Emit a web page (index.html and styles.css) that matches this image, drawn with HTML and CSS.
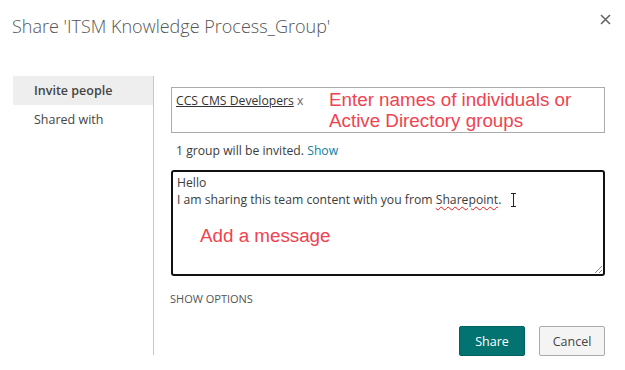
FILE: index.html
```html
<!DOCTYPE html>
<html lang="en">
<head>
    <meta charset="UTF-8">
    <meta name="viewport" content="width=device-width, initial-scale=1.0">
    <title>Share</title>
    <link rel="stylesheet" href="styles.css">
</head>
<body>
    <div class="dialog">
        <div class="cabecalho">
            <h1 class="titulo">Share 'ITSM Knowledge Process_Group'</h1>
            <button class="fechar" title="Close">
                <svg width="11" height="11" viewBox="0 0 11 11"><path d="M1 1 L10 10 M10 1 L1 10" stroke="#666" stroke-width="1.6" fill="none"/></svg>
            </button>
        </div>

        <div class="corpo">
            <div class="menu">
                <div class="item ativo">Invite people</div>
                <div class="item">Shared with</div>
            </div>

            <div class="conteudo">
                <div class="caixaNomes">
                    <span class="pessoa">CCS CMS Developers</span> <span class="remover">x</span>
                    <div class="nota notaNomes">Enter names of individuals or<br>Active Directory groups</div>
                </div>
                <p class="convidados">1 group will be invited. <a class="link">Show</a></p>

                <div class="caixaMensagem">
                    <p>Hello</p>
                    <p>I am sharing this team content with you from <span class="erro">Sharepoint</span>.</p>
                    <span class="cursor"></span>
                    <div class="nota notaMensagem">Add a message</div>
                    <svg class="alca" width="8" height="8" viewBox="0 0 8 8"><path d="M8 1 L1 8 M8 5 L5 8" stroke="#888" stroke-width="1"/></svg>
                </div>

                <p class="opcoes">SHOW OPTIONS</p>

                <div class="botoes">
                    <button class="botao principal">Share</button>
                    <button class="botao">Cancel</button>
                </div>
            </div>
        </div>
    </div>
</body>
</html>
```

FILE: styles.css
```css
body {
    margin: 0;
    font-family: "Open Sans", sans-serif;
    font-size: 12.2px;
    color: #3c3c3c;
    background: #fff;
}

.dialog {
    width: 625px;
    height: 370px;
}

.cabecalho {
    display: flex;
    justify-content: space-between;
    align-items: flex-start;
    padding: 13px 14px 0 12px;
}

.titulo {
    margin: 0;
    font-size: 18px;
    font-weight: 300;
    color: #555;
    line-height: 26px;
}

.fechar {
    border: none;
    background: none;
    padding: 0;
    margin-top: 0;
    width: 11px;
    height: 11px;
    cursor: pointer;
}

.corpo {
    display: flex;
    margin-top: 37px;
    margin-left: 13px;
}

.menu {
    width: 140px;
    height: 279px;
    border-right: 1px solid #c8c8c8;
}

.item {
    padding-left: 21px;
    height: 29px;
    line-height: 29px;
    font-size: 12.5px;
    color: #444;
}

.item.ativo {
    background: #eeeeee;
    font-weight: 600;
}

.conteudo {
    padding: 11px 0 0 17px;
    width: 434px;
}

.caixaNomes {
    position: relative;
    border: 1px solid #ababab;
    padding: 4px 0 0 4px;
    box-sizing: border-box;
    height: 46px;
}

.pessoa {
    color: #333;
    text-decoration: underline;
}

.remover {
    color: #666;
}

.nota {
    position: absolute;
    font-family: "Liberation Sans", Arial, sans-serif;
    font-size: 18.8px;
    line-height: 21px;
    color: #f0434f;
}

.notaNomes {
    left: 157px;
    top: 1px;
}

.convidados {
    margin: 9px 0 0 5px;
    line-height: 18px;
}

.link {
    color: #0f7fa0;
    cursor: pointer;
}

.caixaMensagem {
    position: relative;
    margin-top: 10px;
    height: 106px;
    box-sizing: border-box;
    border: 2px solid #111;
    border-radius: 3px;
    padding: 2px 0 0 4px;
}

.caixaMensagem p {
    margin: 0;
    line-height: 17px;
}

.erro {
    text-decoration: underline wavy #e02020;
    text-decoration-thickness: 1px;
    text-underline-offset: 2px;
}

.cursor {
    position: absolute;
    left: 338px;
    top: 21px;
    width: 5px;
    height: 14px;
    border-top: 1px solid #222;
    border-bottom: 1px solid #222;
    box-sizing: border-box;
}

.cursor::after {
    content: "";
    position: absolute;
    left: 2px;
    top: 0;
    width: 1px;
    height: 12px;
    background: #222;
}

.notaMensagem {
    left: 27px;
    top: 53px;
}

.alca {
    position: absolute;
    right: 1px;
    bottom: 1px;
}

.opcoes {
    margin: 16px 0 0 -1px;
    font-size: 11px;
    color: #555;
    line-height: 14px;
}

.botoes {
    display: flex;
    justify-content: flex-end;
    gap: 14px;
    margin-top: 20px;
}

.botao {
    width: 66px;
    height: 30px;
    font-family: "Open Sans", sans-serif;
    font-size: 12.5px;
    color: #444;
    background: #f4f4f4;
    border: 1px solid #ababab;
    border-radius: 2px;
    cursor: pointer;
}

.botao.principal {
    background: #037372;
    border-color: #036161;
    color: #fff;
}
```
